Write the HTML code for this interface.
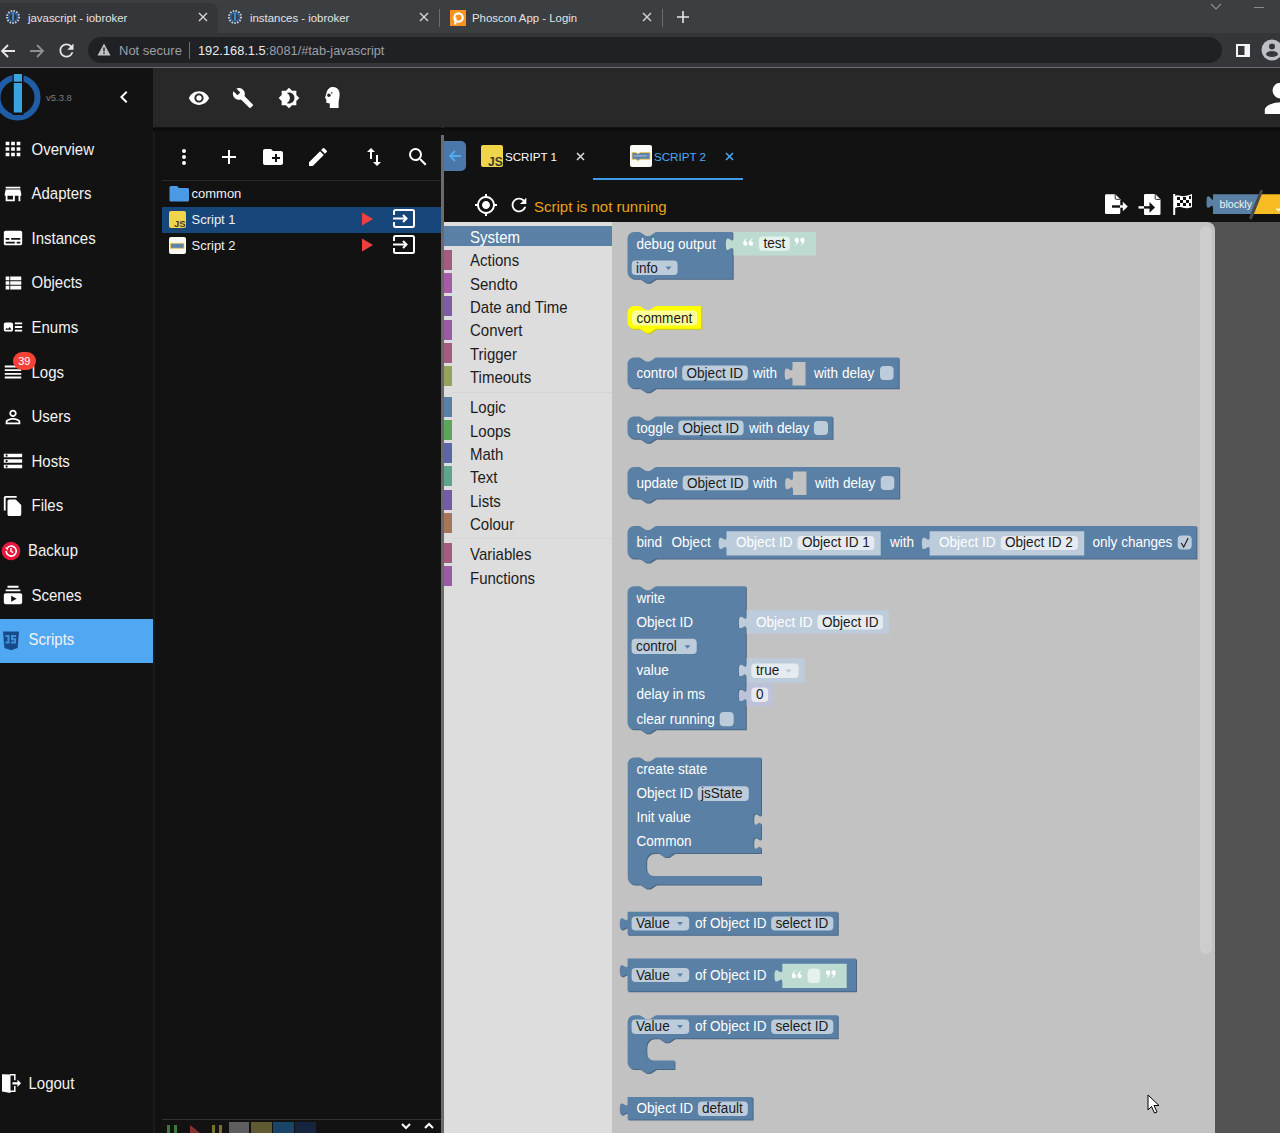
<!DOCTYPE html>
<html><head><meta charset="utf-8">
<style>
*{box-sizing:border-box;margin:0;padding:0}
html,body{width:1280px;height:1133px;overflow:hidden;background:#121212;font-family:"Liberation Sans",sans-serif}
.a{position:absolute}
svg{display:block;overflow:visible}
#tabs{left:0;top:0;width:1280px;height:33px;background:#3c3f42}
#tab1{left:0;top:2.5px;width:218px;height:33px;background:#35363a;border-radius:0 8px 0 0}
.tt{font-size:11.4px;color:#e3e3e3;top:11.5px;white-space:nowrap}
#toolbar{left:0;top:33px;width:1280px;height:34px;background:#35363a}
#omni{left:88px;top:37px;width:1134px;height:26px;background:#202124;border-radius:13px}
#sep{left:0;top:67px;width:1280px;height:1px;background:#6a6b6e}
#side{left:0;top:68px;width:153px;height:1065px;background:#121212}
#sideb{left:153px;top:127px;width:2px;height:1006px;background:#1b1b1b}
#hdr{left:153px;top:68px;width:1127px;height:59.5px;background:#282828}
.nav{position:absolute;left:0;width:153px;height:44.6px;color:#f2f2f2;font-size:15px}
.nav span{position:absolute;left:31.5px;top:13.5px;white-space:nowrap;transform:scaleY(1.1);transform-origin:0 14px}
.nav svg{position:absolute;left:2px;top:11px;width:22px;height:22px}
#tree{left:155px;top:127px;width:286px;height:1006px;background:#121212}
#split{left:440.5px;top:135px;width:3.5px;height:998px;background:#6b6b6b}
#editor{left:444px;top:127px;width:836px;height:95px;background:#121212}
#ws{left:444px;top:222px;width:836px;height:911px;background:#535353}
#tbox{left:444px;top:222px;width:168px;height:911px;background:#dddddd}
#fly{left:612px;top:222px;width:603px;height:911px;background:#c2c2c2;border-top-right-radius:8px}
.cat{position:absolute;left:470px;font-size:15px;line-height:17px;color:#1c1c1c;white-space:nowrap;transform:scaleY(1.12);transform-origin:0 14px}
.cb{position:absolute;left:444px;width:8px;height:20px}
.tr{position:absolute;font-size:13px;color:#f0f0f0;white-space:nowrap}
</style></head><body>
<!-- ============ CHROME ============ -->
<div id="tabs" class="a"></div>
<div id="tab1" class="a"></div>
<!-- favicons -->
<svg class="a" style="left:6px;top:10px" width="14" height="14" viewBox="0 0 14 14"><circle cx="7" cy="7" r="6" fill="none" stroke="#c8d0dc" stroke-width="2" stroke-dasharray="1.5 1.3"/><circle cx="7" cy="7" r="4.3" fill="none" stroke="#2a5ea8" stroke-width="1.4"/><rect x="6.2" y="2.5" width="1.6" height="8" fill="#3aa0dc"/></svg>
<svg class="a" style="left:228px;top:10px" width="14" height="14" viewBox="0 0 14 14"><circle cx="7" cy="7" r="6" fill="none" stroke="#c8d0dc" stroke-width="2" stroke-dasharray="1.5 1.3"/><circle cx="7" cy="7" r="4.3" fill="none" stroke="#2a5ea8" stroke-width="1.4"/><rect x="6.2" y="2.5" width="1.6" height="8" fill="#3aa0dc"/></svg>
<svg class="a" style="left:450px;top:10px" width="16" height="16" viewBox="0 0 16 16"><rect width="16" height="16" fill="#f7931e"/><circle cx="8.5" cy="7.5" r="4.2" fill="none" stroke="#fff" stroke-width="2.2"/><rect x="4.3" y="7.5" width="2.2" height="7" fill="#fff"/></svg>
<div class="a tt" style="left:28px">javascript - iobroker</div>
<div class="a tt" style="left:250px">instances - iobroker</div>
<div class="a tt" style="left:472px">Phoscon App - Login</div>
<svg class="a" style="left:198px;top:12px" width="10" height="10" viewBox="0 0 10 10"><path d="M1,1 9,9 M9,1 1,9" stroke="#d6d6d6" stroke-width="1.4"/></svg>
<svg class="a" style="left:419px;top:12px" width="10" height="10" viewBox="0 0 10 10"><path d="M1,1 9,9 M9,1 1,9" stroke="#d6d6d6" stroke-width="1.4"/></svg>
<svg class="a" style="left:642px;top:12px" width="10" height="10" viewBox="0 0 10 10"><path d="M1,1 9,9 M9,1 1,9" stroke="#d6d6d6" stroke-width="1.4"/></svg>
<div class="a" style="left:439px;top:9px;width:1px;height:18px;background:#6a6d70"></div>
<div class="a" style="left:662px;top:9px;width:1px;height:18px;background:#6a6d70"></div>
<svg class="a" style="left:677px;top:11px" width="12" height="12" viewBox="0 0 12 12"><path d="M6,0 V12 M0,6 H12" stroke="#e8e8e8" stroke-width="1.6"/></svg>
<svg class="a" style="left:1210px;top:3px" width="12" height="8" viewBox="0 0 12 8"><path d="M1,1 6,6 11,1" stroke="#8a8d90" stroke-width="1.2" fill="none"/></svg>
<div class="a" style="left:1254px;top:7px;width:10px;height:1.2px;background:#8a8d90"></div>
<div id="toolbar" class="a"></div>
<svg class="a" style="left:0;top:43px" width="16" height="16" viewBox="0 0 16 16"><path d="M15,8 H2 M8,2 2,8 8,14" stroke="#e6e6e6" stroke-width="1.8" fill="none"/></svg>
<svg class="a" style="left:29px;top:43px" width="16" height="16" viewBox="0 0 16 16"><path d="M1,8 H14 M8,2 14,8 8,14" stroke="#8d8f92" stroke-width="1.8" fill="none"/></svg>
<svg class="a" style="left:56px;top:39.5px" width="21" height="21" viewBox="0 0 24 24"><path fill="#e6e6e6" d="M17.65 6.35A7.958 7.958 0 0 0 12 4c-4.42 0-7.99 3.58-7.99 8s3.57 8 7.99 8c3.73 0 6.84-2.55 7.73-6h-2.08A5.99 5.99 0 0 1 12 18c-3.31 0-6-2.69-6-6s2.69-6 6-6c1.66 0 3.14.69 4.22 1.78L13 11h7V4l-2.35 2.35z"/></svg>
<div id="omni" class="a"></div>
<svg class="a" style="left:97px;top:43px" width="14" height="13" viewBox="0 0 14 13"><path d="M7,0.5 13.5,12.5 H0.5 Z" fill="#c0c2c5"/><rect x="6.3" y="4.5" width="1.4" height="4" fill="#202124"/><rect x="6.3" y="9.5" width="1.4" height="1.4" fill="#202124"/></svg>
<div class="a" style="left:119px;top:43px;font-size:13px;color:#9aa0a6;white-space:nowrap">Not secure</div>
<div class="a" style="left:189px;top:42px;width:1px;height:17px;background:#6f7073"></div>
<div class="a" style="left:198px;top:43px;font-size:12.8px;color:#e8eaed;white-space:nowrap">192.168.1.5<span style="color:#9aa0a6">:8081/#tab-javascript</span></div>
<svg class="a" style="left:1236px;top:44px" width="14" height="13" viewBox="0 0 14 13"><rect x="0" y="0" width="14" height="13" fill="#f4f4f4"/><rect x="2" y="2" width="6.5" height="9" fill="#35363a"/></svg>
<svg class="a" style="left:1261px;top:39px" width="22" height="22" viewBox="0 0 22 22"><circle cx="11" cy="11" r="10.5" fill="#bdc1c6"/><circle cx="11" cy="7.5" r="3" fill="#35363a"/><ellipse cx="11" cy="15" rx="6" ry="3" fill="#35363a"/></svg>
<div id="sep" class="a"></div>

<!-- ============ APP ============ -->
<div id="side" class="a"></div>
<div id="hdr" class="a"></div>
<div id="sideb" class="a"></div>
<!-- logo -->
<svg class="a" style="left:-6px;top:74px" width="48" height="48" viewBox="0 0 48 48"><circle cx="23.5" cy="23.5" r="20" fill="none" stroke="#1f5ea6" stroke-width="6"/><rect x="18.5" y="-1" width="11" height="42" fill="#121212"/><rect x="19.8" y="0" width="8.2" height="7.7" fill="#3ba3e0"/><rect x="19.8" y="9" width="8.2" height="29.5" fill="#3ba3e0"/></svg>
<div class="a" style="left:46px;top:92px;font-size:9.5px;color:#7a7a7a">v5.3.8</div>
<svg class="a" style="left:112px;top:85px" width="24" height="24" viewBox="0 0 24 24"><path fill="#fff" d="M15.41 7.41L14 6l-6 6 6 6 1.41-1.41L10.83 12z"/></svg>
<!-- header icons -->
<svg class="a" style="left:188px;top:86.6px" width="22" height="22" viewBox="0 0 24 24"><path fill="#fff" d="M12 4.5C7 4.5 2.73 7.61 1 12c1.73 4.39 6 7.5 11 7.5s9.27-3.11 11-7.5c-1.73-4.39-6-7.5-11-7.5zM12 17c-2.76 0-5-2.24-5-5s2.24-5 5-5 5 2.24 5 5-2.24 5-5 5zm0-8c-1.66 0-3 1.34-3 3s1.34 3 3 3 3-1.34 3-3-1.34-3-3-3z"/></svg>
<svg class="a" style="left:232.4px;top:86.6px" width="22" height="22" viewBox="0 0 24 24"><path fill="#fff" d="M22.7 19l-9.1-9.1c.9-2.3.4-5-1.5-6.9-2-2-5-2.4-7.4-1.3L9 6 6 9 1.6 4.7C.4 7.1.9 10.1 2.9 12.1c1.9 1.9 4.6 2.4 6.9 1.5l9.1 9.1c.4.4 1 .4 1.4 0l2.3-2.3c.5-.4.5-1.1.1-1.4z"/></svg>
<svg class="a" style="left:277.6px;top:86.6px" width="22" height="22" viewBox="0 0 24 24"><path fill="#fff" d="M20 8.69V4h-4.69L12 .69 8.69 4H4v4.69L.69 12 4 15.31V20h4.69L12 23.31 15.31 20H20v-4.69L23.31 12 20 8.69zM12 18c-.89 0-1.74-.2-2.5-.55C11.56 16.5 13 14.42 13 12s-1.44-4.5-3.5-5.45C10.26 6.2 11.11 6 12 6c3.31 0 6 2.69 6 6s-2.69 6-6 6z"/></svg>
<svg class="a" style="left:315px;top:82px" width="35" height="30" viewBox="0 0 35 30"><path fill="#fff" d="M14.8 26V21.6L11.3 20.8V17.2L10 15.9 11.6 10.5C12.3 7 15 5 18.2 5 22 5 24.6 8 24.6 12.3 24.6 15 24 18 23.6 20V26z"/><circle cx="13.9" cy="13.2" r="1.7" fill="#282828"/><circle cx="16.7" cy="10.8" r="0.9" fill="#555"/></svg>
<svg class="a" style="left:1256.6px;top:75.4px" width="46.8" height="46.8" viewBox="0 0 24 24"><path fill="#fff" d="M12 12c2.21 0 4-1.79 4-4s-1.79-4-4-4-4 1.79-4 4 1.79 4 4 4zm0 2c-2.67 0-8 1.34-8 4v2h16v-2c0-2.66-5.33-4-8-4z"/></svg>

<!-- sidebar nav -->
<div class="nav" style="top:127px"><svg width="24" height="24" viewBox="0 0 24 24"><path fill="#fff" d="M4 8h4V4H4v4zm6 12h4v-4h-4v4zm-6 0h4v-4H4v4zm0-6h4v-4H4v4zm6 0h4v-4h-4v4zm6-10v4h4V4h-4zm-6 4h4V4h-4v4zm6 6h4v-4h-4v4zm0 6h4v-4h-4v4z"/></svg><span>Overview</span></div>
<div class="nav" style="top:171.6px"><svg width="24" height="24" viewBox="0 0 24 24"><path fill="#fff" d="M20 4H4v2h16V4zm1 10v-2l-1-5H4l-1 5v2h1v6h10v-6h4v6h2v-6h1zm-9 4H6v-4h6v4z"/></svg><span>Adapters</span></div>
<div class="nav" style="top:216.2px"><svg width="24" height="24" viewBox="0 0 24 24"><path fill="#fff" d="M20 4H4c-1.1 0-2 .9-2 2v12c0 1.1.9 2 2 2h16c1.1 0 2-.9 2-2V6c0-1.1-.9-2-2-2zM4 12h4v2H4v-2zm10 6H4v-2h10v2zm6 0h-4v-2h4v2zm0-4H10v-2h10v2z"/></svg><span>Instances</span></div>
<div class="nav" style="top:260.8px"><svg width="24" height="24" viewBox="0 0 24 24"><path fill="#fff" d="M4 14h4v-4H4v4zm0 5h4v-4H4v4zM4 9h4V5H4v4zm5 5h12v-4H9v4zm0 5h12v-4H9v4zM9 5v4h12V5H9z"/></svg><span>Objects</span></div>
<div class="nav" style="top:305.4px"><svg width="24" height="24" viewBox="0 0 24 24"><path fill="#fff" d="M22 13h-8v-2h8v2zm0-6h-8v2h8V7zm-8 10h8v-2h-8v2zm-2-8v6c0 1.1-.9 2-2 2H4c-1.1 0-2-.9-2-2V9c0-1.1.9-2 2-2h6c1.1 0 2 .9 2 2zm-1.5 6l-2.25-3-1.75 2.26-1.25-1.51L3.5 15h7z"/></svg><span>Enums</span></div>
<div class="nav" style="top:350px"><svg width="24" height="24" viewBox="0 0 24 24"><path fill="#fff" d="M3 5h18v2H3zM3 9h18v2H3zM3 13h18v2H3zM3 17h18v2H3z"/></svg><span>Logs</span></div>
<div class="a" style="left:12.8px;top:351.5px;width:23px;height:18px;border-radius:9px;background:#f44336;color:#fff;font-size:11px;text-align:center;line-height:18px">39</div>
<div class="nav" style="top:394.6px"><svg width="24" height="24" viewBox="0 0 24 24"><path fill="#fff" d="M12 5.9c1.16 0 2.1.94 2.1 2.1s-.94 2.1-2.1 2.1S9.9 9.16 9.9 8s.94-2.1 2.1-2.1m0 9c2.97 0 6.1 1.46 6.1 2.1v1.1H5.9V17c0-.64 3.13-2.1 6.1-2.1M12 4C9.79 4 8 5.79 8 8s1.79 4 4 4 4-1.79 4-4-1.79-4-4-4zm0 9c-2.67 0-8 1.34-8 4v3h16v-3c0-2.66-5.33-4-8-4z"/></svg><span>Users</span></div>
<div class="nav" style="top:439.2px"><svg width="24" height="24" viewBox="0 0 24 24"><path fill="#fff" d="M2 20h20v-4H2v4zm2-3h2v2H4v-2zM2 4v4h20V4H2zm4 3H4V5h2v2zm-4 7h20v-4H2v4zm2-3h2v2H4v-2z"/></svg><span>Hosts</span></div>
<div class="nav" style="top:483.8px"><svg width="24" height="24" viewBox="0 0 24 24"><path fill="#fff" d="M16 1H4c-1.1 0-2 .9-2 2v14h2V3h12V1zm-1 4l6 6v10c0 1.1-.9 2-2 2H7.99C6.89 23 6 22.1 6 21l.01-14c0-1.1.89-2 1.99-2h7z"/></svg><span>Files</span></div>
<div class="nav" style="top:528.4px"><svg width="24" height="24" viewBox="0 0 24 24" style="left:0;top:10.5px;width:24px;height:24px"><circle cx="11" cy="12" r="9.3" fill="#e8173c"/><path fill="none" stroke="#fff" stroke-width="1.6" d="M6.2 12a5 5 0 1 0 1.6-3.6"/><path fill="#fff" d="M5 8.5l3.2-.2-.4 3.2z"/><path fill="none" stroke="#fff" stroke-width="1.4" d="M11 9v3.3l2.2 1.3"/></svg><span style="left:28px">Backup</span></div>
<div class="nav" style="top:573px"><svg width="24" height="24" viewBox="0 0 24 24"><path fill="#fff" d="M20 8H4V6h16v2zm-2-6H6v2h12V2zm4 10v8c0 1.1-.9 2-2 2H4c-1.1 0-2-.9-2-2v-8c0-1.1.9-2 2-2h16c1.1 0 2 .9 2 2zm-6 4l-6-3.27v6.53L16 16z"/></svg><span>Scenes</span></div>
<div class="nav" style="top:618.5px;background:#50a8f2;height:44.5px"><svg width="24" height="24" viewBox="0 0 24 24" style="left:0;top:10px;width:24px;height:24px"><path fill="#164a88" d="M3 2.6h16l-1.4 16.3-6.6 2.3-6.6-2.3z"/><path fill="#3d92d8" d="M5.5 6h4v8.5h-4v-2h2v-4.5h-2zM11 6h5v2h-3v1.3h3v5.2h-5v-2h3v-1.2h-3z"/></svg><span style="left:28.5px;top:12.5px">Scripts</span></div>
<div class="nav" style="top:1061px"><svg width="24" height="24" viewBox="0 0 24 24" style="left:0;top:10px;width:24px;height:24px"><path fill="#fff" d="M2 3.2l8.5 0.2v18.5L2 20.5z"/><path fill="none" stroke="#fff" stroke-width="1.5" d="M10 3.8h4.8v5.5 M10 20.3h4.8v-5.2"/><path fill="#fff" d="M12.5 11.2h5v-2.7l3.5 3.8-3.5 3.8v-2.7h-5z"/></svg><span style="left:28.5px;top:14px">Logout</span></div>

<!-- ============ TREE PANEL ============ -->
<div id="tree" class="a"></div>
<svg class="a" style="left:172px;top:145px" width="24" height="24" viewBox="0 0 24 24"><circle cx="12" cy="6" r="2" fill="#fff"/><circle cx="12" cy="12" r="2" fill="#fff"/><circle cx="12" cy="18" r="2" fill="#fff"/></svg>
<svg class="a" style="left:217px;top:145px" width="24" height="24" viewBox="0 0 24 24"><path fill="#fff" d="M19 13h-6v6h-2v-6H5v-2h6V5h2v6h6v2z"/></svg>
<svg class="a" style="left:261px;top:145px" width="24" height="24" viewBox="0 0 24 24"><path fill="#fff" d="M20 6h-8l-2-2H4c-1.11 0-1.99.89-1.99 2L2 18c0 1.11.89 2 2 2h16c1.11 0 2-.89 2-2V8c0-1.11-.89-2-2-2zm-1 8h-3v3h-2v-3h-3v-2h3V9h2v3h3v2z"/></svg>
<svg class="a" style="left:306px;top:145px" width="24" height="24" viewBox="0 0 24 24"><path fill="#fff" d="M3 17.25V21h3.75L17.81 9.94l-3.75-3.75L3 17.25zM20.71 7.04a.996.996 0 0 0 0-1.41l-2.34-2.34a.996.996 0 0 0-1.41 0l-1.83 1.83 3.75 3.75 1.83-1.83z"/></svg>
<svg class="a" style="left:362px;top:145px" width="24" height="24" viewBox="0 0 24 24"><path fill="#fff" d="M16 17.01V10h-2v7.01h-3L15 21l4-3.99h-3zM9 3L5 6.99h3V14h2V6.99h3L9 3z"/></svg>
<svg class="a" style="left:406px;top:145px" width="24" height="24" viewBox="0 0 24 24"><path fill="#fff" d="M15.5 14h-.79l-.28-.27A6.471 6.471 0 0 0 16 9.5 6.5 6.5 0 1 0 9.5 16c1.61 0 3.09-.59 4.23-1.57l.27.28v.79l5 4.99L20.49 19l-4.99-5zm-6 0C7.01 14 5 11.99 5 9.5S7.01 5 9.5 5 14 7.01 14 9.5 11.99 14 9.5 14z"/></svg>
<div class="a" style="left:162px;top:179.5px;width:279px;height:1.5px;background:#2a2a2a"></div>
<svg class="a" style="left:168px;top:184px" width="22" height="20" viewBox="0 0 22 20"><path fill="#4a9ae6" d="M1.5 3.5c0-1 .8-1.5 1.6-1.5H9l2 2h8.4c.9 0 1.6.6 1.6 1.5v10.4c0 .9-.7 1.6-1.6 1.6H3.1c-.9 0-1.6-.7-1.6-1.6z"/></svg>
<div class="tr" style="left:191.5px;top:186px">common</div>
<div class="a" style="left:162px;top:206.5px;width:279px;height:26px;background:#16467a"></div>
<svg class="a" style="left:169px;top:211px" width="17" height="17" viewBox="0 0 17 17"><rect width="17" height="17" rx="2" fill="#f0d54a"/><text x="5" y="15.5" font-size="9.5" font-weight="bold" font-family="Liberation Sans" fill="#3d3a2a">JS</text></svg>
<div class="tr" style="left:191.5px;top:212px">Script 1</div>
<svg class="a" style="left:361px;top:212px" width="13" height="14" viewBox="0 0 13 14"><path d="M1,0.5 12,7 1,13.5z" fill="#ee4040"/></svg>
<svg class="a" style="left:393px;top:209px" width="22" height="19" viewBox="0 0 22 19"><rect x="1" y="1" width="20" height="17" rx="1.5" fill="none" stroke="#fff" stroke-width="2"/><rect x="0" y="6" width="3" height="7" fill="#16467a"/><path d="M0,9.5 H13 M10,6 13.5,9.5 10,13" stroke="#fff" stroke-width="2" fill="none"/></svg>
<svg class="a" style="left:169px;top:237px" width="17" height="17" viewBox="0 0 17 17"><rect width="17" height="17" rx="2" fill="#fafaf5"/><path d="M1.5 6.3h13.5v5H1.5z" fill="#5e83ab" stroke="#eccb52" stroke-width="0.8"/></svg>
<div class="tr" style="left:191.5px;top:238px">Script 2</div>
<svg class="a" style="left:361px;top:238px" width="13" height="14" viewBox="0 0 13 14"><path d="M1,0.5 12,7 1,13.5z" fill="#ee4040"/></svg>
<svg class="a" style="left:393px;top:235px" width="22" height="19" viewBox="0 0 22 19"><rect x="1" y="1" width="20" height="17" rx="1.5" fill="none" stroke="#fff" stroke-width="2"/><rect x="0" y="6" width="3" height="7" fill="#121212"/><path d="M0,9.5 H13 M10,6 13.5,9.5 10,13" stroke="#fff" stroke-width="2" fill="none"/></svg>
<!-- bottom of tree -->
<div class="a" style="left:162px;top:1119px;width:279px;height:1px;background:#333"></div>
<div class="a" style="left:167px;top:1125px;width:3px;height:8px;background:#3b7a3b"></div>
<div class="a" style="left:174px;top:1125px;width:3px;height:8px;background:#3b7a3b"></div>
<svg class="a" style="left:190px;top:1125px" width="10" height="8" viewBox="0 0 10 8"><path d="M0,0 10,8 0,8z" fill="#8a2f2f"/></svg>
<div class="a" style="left:212px;top:1125px;width:3px;height:8px;background:#7a7030"></div>
<div class="a" style="left:219px;top:1125px;width:3px;height:8px;background:#7a7030"></div>
<div class="a" style="left:229px;top:1122px;width:20px;height:11px;background:#5e5e5e"></div>
<div class="a" style="left:251px;top:1122px;width:21px;height:11px;background:#5f5a32"></div>
<div class="a" style="left:273px;top:1122px;width:21px;height:11px;background:#1b4469"></div>
<div class="a" style="left:295px;top:1122px;width:21px;height:11px;background:#16243e"></div>
<svg class="a" style="left:400px;top:1122px" width="12" height="8" viewBox="0 0 12 8"><path d="M2,2 6,6 10,2" stroke="#fff" stroke-width="2" fill="none"/></svg>
<svg class="a" style="left:423px;top:1122px" width="12" height="8" viewBox="0 0 12 8"><path d="M2,6 6,2 10,6" stroke="#fff" stroke-width="2" fill="none"/></svg>

<!-- ============ EDITOR ============ -->
<div id="editor" class="a"></div>
<div id="split" class="a"></div>
<div class="a" style="left:444px;top:140.5px;width:22px;height:30px;background:#4a78aa;border-radius:0 5px 5px 0"></div>
<svg class="a" style="left:448px;top:149px" width="14" height="14" viewBox="0 0 14 14"><path d="M13,7 H2 M7,2 2,7 7,12" stroke="#55aaf0" stroke-width="1.8" fill="none"/></svg>
<svg class="a" style="left:481px;top:145px" width="22" height="22" viewBox="0 0 22 22"><rect width="22" height="22" rx="2" fill="#f0d54a"/><text x="7" y="20.5" font-size="12" font-weight="bold" font-family="Liberation Sans" fill="#3d3a2a">JS</text></svg>
<div class="a" style="left:505px;top:149.5px;font-size:11.6px;color:#fff;white-space:nowrap">SCRIPT 1</div>
<svg class="a" style="left:575.5px;top:151.5px" width="9" height="9" viewBox="0 0 9 9"><path d="M1,1 8,8 M8,1 1,8" stroke="#ddd" stroke-width="1.5"/></svg>
<svg class="a" style="left:630px;top:145px" width="22" height="22" viewBox="0 0 22 22"><rect width="22" height="22" rx="2" fill="#fafaf7"/><path d="M2 7.5h4l1 1h2l1-1h10v6.8H10l-1 1H7l-1-1H2z" fill="#5e83ab" stroke="#eccb52" stroke-width="0.9"/><rect x="4" y="10" width="13" height="1.6" fill="#8fa9c6"/></svg>
<div class="a" style="left:654px;top:149.5px;font-size:11.6px;color:#4dabf5;white-space:nowrap">SCRIPT 2</div>
<svg class="a" style="left:724.5px;top:151.5px" width="9" height="9" viewBox="0 0 9 9"><path d="M1,1 8,8 M8,1 1,8" stroke="#4dabf5" stroke-width="1.5"/></svg>
<div class="a" style="left:593px;top:177.5px;width:149.5px;height:2px;background:#3d9be8"></div>
<svg class="a" style="left:473.5px;top:192.5px" width="24" height="24" viewBox="0 0 24 24"><path fill="#fff" d="M12 8c-2.21 0-4 1.79-4 4s1.79 4 4 4 4-1.79 4-4-1.79-4-4-4zm8.94 3A8.994 8.994 0 0 0 13 3.06V1h-2v2.06A8.994 8.994 0 0 0 3.06 11H1v2h2.06A8.994 8.994 0 0 0 11 20.94V23h2v-2.06A8.994 8.994 0 0 0 20.94 13H23v-2h-2.06zM12 19c-3.87 0-7-3.13-7-7s3.13-7 7-7 7 3.13 7 7-3.13 7-7 7z"/></svg>
<svg class="a" style="left:508px;top:193.5px" width="22" height="22" viewBox="0 0 24 24"><path fill="#fff" d="M17.65 6.35A7.958 7.958 0 0 0 12 4c-4.42 0-7.99 3.58-7.99 8s3.57 8 7.99 8c3.73 0 6.84-2.55 7.73-6h-2.08A5.99 5.99 0 0 1 12 18c-3.31 0-6-2.69-6-6s2.69-6 6-6c1.66 0 3.14.69 4.22 1.78L13 11h7V4l-2.35 2.35z"/></svg>
<div class="a" style="left:534px;top:197.5px;font-size:15px;color:#eca31a;white-space:nowrap">Script is not running</div>
<!-- right toolbar icons -->
<svg class="a" style="left:1104px;top:193px" width="24" height="23" viewBox="0 0 24 23"><path fill="#fff" d="M1 2.5q0-1.3 1.3-1.3h9l5 5v13.6q0 1.2-1.2 1.2H2.3Q1 21 1 19.8z"/><path d="M11.2 1.2v4.2q0 .9.9.9h4.2" fill="none" stroke="#121212" stroke-width="0.9"/><rect x="8" y="12.3" width="8" height="2.4" fill="#121212"/><rect x="16" y="12.3" width="3.2" height="2.4" fill="#fff"/><path d="M18.8 8.8l5 4.7-5 4.7z" fill="#fff"/></svg>
<svg class="a" style="left:1138px;top:193px" width="24" height="23" viewBox="0 0 24 23"><rect x="0.5" y="13.2" width="6" height="2.4" fill="#fff"/><path fill="#fff" d="M6 2.3q0-1.3 1.3-1.3h10l5.2 5.2v14.6q0 1.2-1.2 1.2H7.3Q6 22 6 20.8z"/><path d="M17.2 1v4.5q0 .9.9.9h4.4" fill="none" stroke="#121212" stroke-width="0.9"/><rect x="6" y="13.2" width="6" height="2.4" fill="#121212"/><path d="M11.5 9l5.5 5.4-5.5 5.4z" fill="#121212"/></svg>
<svg class="a" style="left:1172px;top:193px" width="24" height="22" viewBox="0 0 24 22"><rect x="1.2" y="1" width="2" height="21" fill="#fff"/><path fill="#fff" d="M3 3c3-2 6 1 10 0s5-1 7-2v13c-2 1-4 1.5-7 1s-6-2-10 0z"/><g fill="#121212"><rect x="5" y="4" width="3" height="3"/><rect x="11" y="4" width="3" height="3"/><rect x="17" y="3" width="2" height="3"/><rect x="8" y="7" width="3" height="3"/><rect x="14" y="7" width="3" height="3"/><rect x="5" y="10" width="3" height="3"/><rect x="11" y="10" width="3" height="3"/><rect x="17" y="10" width="2" height="3"/></g></svg>
<svg class="a" style="left:1205px;top:190px" width="75" height="32" viewBox="0 0 75 32"><path d="M8 4.3H54L46 24H8V18.6c0-8.5-6.5,6.8-6.5,-6.4S8,12.7 8,9.6z" fill="#5b80a5"/><text x="14.6" y="17.8" font-size="10.6" fill="#f2f4f8" font-family="Liberation Sans">blockly</text><path d="M55 4.3H75V24H47z" fill="#f8bd22"/><path d="M56.4 1.3L45.8 27.9" stroke="#4a4a4a" stroke-width="3" stroke-linecap="round"/><path d="M71.5 18.5l2 2 l3 -3" stroke="#fff" stroke-width="1.5" fill="none"/></svg>

<div class="a" style="left:153px;top:127.5px;width:1127px;height:4px;background:linear-gradient(#090909,#121212)"></div>
<!-- ============ BLOCKLY ============ -->
<div id="ws" class="a"></div>
<div id="tbox" class="a"></div>
<div id="fly" class="a"></div>
<div class="a" style="left:444px;top:226px;width:168px;height:20px;background:#5b80a5"></div>
<div class="cat" style="left:470px;top:229px;color:#fff">System</div>
<div class="cb" style="top:249.5px;background:#a55b80"></div><div class="cat" style="top:252px">Actions</div>
<div class="cb" style="top:273px;background:#a55ba5"></div><div class="cat" style="top:275.5px">Sendto</div>
<div class="cb" style="top:296.3px;background:#805ba5"></div><div class="cat" style="top:299px">Date and Time</div>
<div class="cb" style="top:319.6px;background:#995ba5"></div><div class="cat" style="top:322px">Convert</div>
<div class="cb" style="top:342.9px;background:#a55b80"></div><div class="cat" style="top:345.5px">Trigger</div>
<div class="cb" style="top:366.2px;background:#94a55b"></div><div class="cat" style="top:369px">Timeouts</div>
<div class="a" style="left:452px;top:392px;width:160px;height:1px;background:#d5d5d5"></div>
<div class="cb" style="top:396.5px;background:#5b80a5"></div><div class="cat" style="top:399px">Logic</div>
<div class="cb" style="top:419.8px;background:#5ba55b"></div><div class="cat" style="top:422.5px">Loops</div>
<div class="cb" style="top:443.1px;background:#5b67a5"></div><div class="cat" style="top:446px">Math</div>
<div class="cb" style="top:466.4px;background:#5ba58c"></div><div class="cat" style="top:469px">Text</div>
<div class="cb" style="top:489.7px;background:#745ba5"></div><div class="cat" style="top:492.5px">Lists</div>
<div class="cb" style="top:513px;background:#a5745b"></div><div class="cat" style="top:515.5px">Colour</div>
<div class="a" style="left:452px;top:538px;width:160px;height:1px;background:#d5d5d5"></div>
<div class="cb" style="top:543px;background:#a55b80"></div><div class="cat" style="top:546px">Variables</div>
<div class="cb" style="top:566.3px;background:#995ba5"></div><div class="cat" style="top:569.5px">Functions</div>
<!-- flyout scrollbar -->
<div class="a" style="left:1200px;top:226px;width:12px;height:728px;border-radius:6px;background:#cdcdcd"></div>
<svg class="a" style="left:0;top:0" width="1280" height="1133" viewBox="0 0 1280 1133" font-family="Liberation Sans">
<path d="M627.5,238.5 A6.5,6.5 0 0,1 634.0,232 H639.8 l6,4 4,0 6,-4 H732.7 V237.8 c0,8.5 -7.8,-6.8 -7.8,6.4 s7.8,-2.1 7.8,6.4 V278.7 H655.8 l-6,4 -4,0 -6,-4 H634.0 A6.5,6.5 0 0,1 627.5,272.2 Z" fill="#496684" transform="translate(1,1)"/><path d="M627.5,238.5 A6.5,6.5 0 0,1 634.0,232 H639.8 l6,4 4,0 6,-4 H732.7 V237.8 c0,8.5 -7.8,-6.8 -7.8,6.4 s7.8,-2.1 7.8,6.4 V278.7 H655.8 l-6,4 -4,0 -6,-4 H634.0 A6.5,6.5 0 0,1 627.5,272.2 Z" fill="#5b80a5"/>
<path d="M733.5,232 H816 V255.5 H733.5 V250.6 c0,-8.5 -7.8,6.8 -7.8,-6.4 s7.8,2.1 7.8,-6.4 Z" fill="#bddbd1"/>
<text transform="translate(636.5,248.8) scale(0.93,1)" fill="#fff" font-size="14.6">debug output</text>
<rect x="631.7" y="260.4" width="45.90" height="14.70" rx="4" fill="#bdccdb"/>
<text transform="translate(636,273) scale(0.93,1)" fill="#1a1a1a" font-size="14.6">info</text>
<path d="M665.5,266.5 h6 l-3,3.5 z" fill="#5b80a5"/>
<path d="M747.8,237.5 C744.8,238.7 743.2,241.3 743.2,243.6 A2.2,2.2 0 1,0 745.4,241.4 C745.7,239.8 746.6,238.6 747.8,237.5 Z M753.4,237.5 C750.4,238.7 748.8000000000001,241.3 748.8000000000001,243.6 A2.2,2.2 0 1,0 751.0,241.4 C751.3000000000001,239.8 752.2,238.6 753.4,237.5 Z " fill="#fff"/><path d="M4.8,0 C1.8,1.2 0.2,3.8 0.2,6.1 A2.2,2.2 0 1,0 2.4,3.9 C2.7,2.3 3.6,1.1 4.8,0 Z M10.399999999999999,0 C7.3999999999999995,1.2 5.8,3.8 5.8,6.1 A2.2,2.2 0 1,0 8.0,3.9 C8.3,2.3 9.2,1.1 10.399999999999999,0 Z " fill="#fff" transform="translate(804.8,246.1) rotate(180)"/>
<rect x="758.8" y="236.4" width="31.00" height="14.40" rx="4" fill="#e5f1ed"/>
<text transform="translate(763.5,248) scale(0.93,1)" fill="#1a1a1a" font-size="14.6">test</text>
<path d="M627.5,312.5 A6.5,6.5 0 0,1 634.0,306 H639.8 l6,4 4,0 6,-4 H701.2 V328.7 H655.8 l-6,4 -4,0 -6,-4 H634.0 A6.5,6.5 0 0,1 627.5,322.2 Z" fill="#cccc00" transform="translate(1,1)"/><path d="M627.5,312.5 A6.5,6.5 0 0,1 634.0,306 H639.8 l6,4 4,0 6,-4 H701.2 V328.7 H655.8 l-6,4 -4,0 -6,-4 H634.0 A6.5,6.5 0 0,1 627.5,322.2 Z" fill="#ffff00"/>
<rect x="632" y="310.5" width="65.00" height="15.00" rx="4" fill="#ffff99"/>
<text transform="translate(636.5,322.5) scale(0.93,1)" fill="#1a1a1a" font-size="14.6">comment</text>
<path d="M627.5,364.0 A6.5,6.5 0 0,1 634.0,357.5 H639.8 l6,4 4,0 6,-4 H898.7 V388.2 H655.8 l-6,4 -4,0 -6,-4 H634.0 A6.5,6.5 0 0,1 627.5,381.7 Z" fill="#496684" transform="translate(1,1)"/><path d="M627.5,364.0 A6.5,6.5 0 0,1 634.0,357.5 H639.8 l6,4 4,0 6,-4 H898.7 V388.2 H655.8 l-6,4 -4,0 -6,-4 H634.0 A6.5,6.5 0 0,1 627.5,381.7 Z" fill="#5b80a5"/>
<text transform="translate(636.5,377.5) scale(0.93,1)" fill="#fff" font-size="14.6">control</text>
<rect x="682.2" y="365.6" width="65.60" height="14.80" rx="4" fill="#bdccdb"/>
<text transform="translate(686.5,377.5) scale(0.93,1)" fill="#1a1a1a" font-size="14.6">Object ID</text>
<text transform="translate(753,377.5) scale(0.93,1)" fill="#fff" font-size="14.6">with</text>
<path d="M792.5,362 H805.5 V385.6 H792.5 V380.6 c0,-8.5 -7.8,6.8 -7.8,-6.4 s7.8,2.1 7.8,-6.4 Z" fill="#c2c2c2"/>
<text transform="translate(814,377.5) scale(0.93,1)" fill="#fff" font-size="14.6">with delay</text>
<rect x="880" y="366" width="13.60" height="14.00" rx="4" fill="#bdccdb"/>
<path d="M627.5,423.0 A6.5,6.5 0 0,1 634.0,416.5 H639.8 l6,4 4,0 6,-4 H832.5 V438.7 H655.8 l-6,4 -4,0 -6,-4 H634.0 A6.5,6.5 0 0,1 627.5,432.2 Z" fill="#496684" transform="translate(1,1)"/><path d="M627.5,423.0 A6.5,6.5 0 0,1 634.0,416.5 H639.8 l6,4 4,0 6,-4 H832.5 V438.7 H655.8 l-6,4 -4,0 -6,-4 H634.0 A6.5,6.5 0 0,1 627.5,432.2 Z" fill="#5b80a5"/>
<text transform="translate(636.5,432.5) scale(0.93,1)" fill="#fff" font-size="14.6">toggle</text>
<rect x="678.4" y="420.6" width="65.20" height="14.60" rx="4" fill="#bdccdb"/>
<text transform="translate(682.5,432.5) scale(0.93,1)" fill="#1a1a1a" font-size="14.6">Object ID</text>
<text transform="translate(749,432.5) scale(0.93,1)" fill="#fff" font-size="14.6">with delay</text>
<rect x="813.9" y="421" width="14.10" height="14.00" rx="4" fill="#bdccdb"/>
<path d="M627.5,473.5 A6.5,6.5 0 0,1 634.0,467 H639.8 l6,4 4,0 6,-4 H899.2 V498.4 H655.8 l-6,4 -4,0 -6,-4 H634.0 A6.5,6.5 0 0,1 627.5,491.9 Z" fill="#496684" transform="translate(1,1)"/><path d="M627.5,473.5 A6.5,6.5 0 0,1 634.0,467 H639.8 l6,4 4,0 6,-4 H899.2 V498.4 H655.8 l-6,4 -4,0 -6,-4 H634.0 A6.5,6.5 0 0,1 627.5,491.9 Z" fill="#5b80a5"/>
<text transform="translate(636.5,487.5) scale(0.93,1)" fill="#fff" font-size="14.6">update</text>
<rect x="682.7" y="475.5" width="65.60" height="14.80" rx="4" fill="#bdccdb"/>
<text transform="translate(687,487.5) scale(0.93,1)" fill="#1a1a1a" font-size="14.6">Object ID</text>
<text transform="translate(753,487.5) scale(0.93,1)" fill="#fff" font-size="14.6">with</text>
<path d="M793,471.5 H806.4 V495 H793 V490.1 c0,-8.5 -7.8,6.8 -7.8,-6.4 s7.8,2.1 7.8,-6.4 Z" fill="#c2c2c2"/>
<text transform="translate(815,487.5) scale(0.93,1)" fill="#fff" font-size="14.6">with delay</text>
<rect x="880.7" y="476" width="13.60" height="14.00" rx="4" fill="#bdccdb"/>
<path d="M627.5,532.5 A6.5,6.5 0 0,1 634.0,526 H639.8 l6,4 4,0 6,-4 H1196.4 V558.6 H655.8 l-6,4 -4,0 -6,-4 H634.0 A6.5,6.5 0 0,1 627.5,552.1 Z" fill="#496684" transform="translate(1,1)"/><path d="M627.5,532.5 A6.5,6.5 0 0,1 634.0,526 H639.8 l6,4 4,0 6,-4 H1196.4 V558.6 H655.8 l-6,4 -4,0 -6,-4 H634.0 A6.5,6.5 0 0,1 627.5,552.1 Z" fill="#5b80a5"/>
<text transform="translate(636.5,546.7) scale(0.93,1)" fill="#fff" font-size="14.6">bind</text>
<text transform="translate(671.5,546.7) scale(0.93,1)" fill="#fff" font-size="14.6">Object</text>
<path d="M726.5,531.2 H880.7 V555.4 H726.5 V549.8000000000001 c0,-8.5 -7.8,6.8 -7.8,-6.4 s7.8,2.1 7.8,-6.4 Z" fill="#bdccdb"/>
<text transform="translate(736,546.7) scale(0.93,1)" fill="#fff" font-size="14.6">Object ID</text>
<rect x="797.5" y="536" width="76.90" height="14.00" rx="4" fill="#e5ebf1"/>
<text transform="translate(802,546.7) scale(0.93,1)" fill="#1a1a1a" font-size="14.6">Object ID 1</text>
<text transform="translate(890,546.7) scale(0.93,1)" fill="#fff" font-size="14.6">with</text>
<path d="M929.7,531.2 H1084.2 V555.4 H929.7 V549.8000000000001 c0,-8.5 -7.8,6.8 -7.8,-6.4 s7.8,2.1 7.8,-6.4 Z" fill="#bdccdb"/>
<text transform="translate(939,546.7) scale(0.93,1)" fill="#fff" font-size="14.6">Object ID</text>
<rect x="1000.8" y="536" width="77.20" height="14.00" rx="4" fill="#e5ebf1"/>
<text transform="translate(1005,546.7) scale(0.93,1)" fill="#1a1a1a" font-size="14.6">Object ID 2</text>
<text transform="translate(1092.5,546.7) scale(0.93,1)" fill="#fff" font-size="14.6">only changes</text>
<rect x="1177.7" y="535.5" width="14.00" height="14.00" rx="4" fill="#bdccdb"/><path d="M1181.2,543.0 l2.5,4 l4.5,-9" stroke="#222" stroke-width="1.2" fill="none"/>
<path d="M627.5,592.7 A6.5,6.5 0 0,1 634.0,586.2 H639.8 l6,4 4,0 6,-4 H745.8000000000001 V616.0 c0,8.5 -7.8,-6.8 -7.8,6.4 s7.8,-2.1 7.8,6.4 V664.0 c0,8.5 -7.8,-6.8 -7.8,6.4 s7.8,-2.1 7.8,6.4 V688.3 c0,8.5 -7.8,-6.8 -7.8,6.4 s7.8,-2.1 7.8,6.4 V729.3000000000001 H655.8 l-6,4 -4,0 -6,-4 H634.0 A6.5,6.5 0 0,1 627.5,722.8000000000001 Z" fill="#496684" transform="translate(1,1)"/><path d="M627.5,592.7 A6.5,6.5 0 0,1 634.0,586.2 H639.8 l6,4 4,0 6,-4 H745.8000000000001 V616.0 c0,8.5 -7.8,-6.8 -7.8,6.4 s7.8,-2.1 7.8,6.4 V664.0 c0,8.5 -7.8,-6.8 -7.8,6.4 s7.8,-2.1 7.8,6.4 V688.3 c0,8.5 -7.8,-6.8 -7.8,6.4 s7.8,-2.1 7.8,6.4 V729.3000000000001 H655.8 l-6,4 -4,0 -6,-4 H634.0 A6.5,6.5 0 0,1 627.5,722.8000000000001 Z" fill="#5b80a5"/>
<text transform="translate(636.5,602.5) scale(0.93,1)" fill="#fff" font-size="14.6">write</text>
<text transform="translate(636.5,626.5) scale(0.93,1)" fill="#fff" font-size="14.6">Object ID</text>
<rect x="631.6" y="638.7" width="65.10" height="15.30" rx="4" fill="#bdccdb"/>
<text transform="translate(636,651) scale(0.93,1)" fill="#1a1a1a" font-size="14.6">control</text>
<path d="M684.5,645.3 h6 l-3,3.5 z" fill="#5b80a5"/>
<text transform="translate(636.5,675) scale(0.93,1)" fill="#fff" font-size="14.6">value</text>
<text transform="translate(636.5,699) scale(0.93,1)" fill="#fff" font-size="14.6">delay in ms</text>
<text transform="translate(636.5,723.5) scale(0.93,1)" fill="#fff" font-size="14.6">clear running</text>
<rect x="719.7" y="712" width="14.00" height="14.20" rx="4" fill="#bdccdb"/>
<path d="M746.6,610.2 H888.9 V633.6 H746.6 V628.8000000000001 c0,-8.5 -7.8,6.8 -7.8,-6.4 s7.8,2.1 7.8,-6.4 Z" fill="#bdccdb"/>
<text transform="translate(756,626.5) scale(0.93,1)" fill="#fff" font-size="14.6">Object ID</text>
<rect x="817.4" y="614.8" width="65.60" height="14.80" rx="4" fill="#e5ebf1"/>
<text transform="translate(822,626.5) scale(0.93,1)" fill="#1a1a1a" font-size="14.6">Object ID</text>
<path d="M746.6,658.2 H804.5 V682.8 H746.6 V676.8000000000001 c0,-8.5 -7.8,6.8 -7.8,-6.4 s7.8,2.1 7.8,-6.4 Z" fill="#bdccdb"/>
<rect x="751.3" y="663.4" width="47.40" height="14.70" rx="4" fill="#e5ebf1"/>
<text transform="translate(756,675) scale(0.93,1)" fill="#1a1a1a" font-size="14.6">true</text>
<path d="M785.5,669.5 h6 l-3,3.5 z" fill="#bdccdb"/>
<path d="M746.6,683.3 H773.3 V706.2 H746.6 V701.9 c0,-8.5 -7.8,6.8 -7.8,-6.4 s7.8,2.1 7.8,-6.4 Z" fill="#bdc2db"/>
<rect x="751.3" y="687.5" width="16.90" height="14.50" rx="4" fill="#e5e7f1"/>
<text transform="translate(756,699) scale(0.93,1)" fill="#1a1a1a" font-size="14.6">0</text>
<path d="M627.7,764.0 A6.5,6.5 0 0,1 634.2,757.5 H640.0 l6,4 4,0 6,-4 H761.0 V812.8 c0,8.5 -7.8,-6.8 -7.8,6.4 s7.8,-2.1 7.8,6.4 V836.8 c0,8.5 -7.8,-6.8 -7.8,6.4 s7.8,-2.1 7.8,6.4 V853 H674.5 l-6,4 -4,0 -6,-4 H654.2 A8,8 0 0,0 646.2,861 V868 A8,8 0 0,0 654.2,876 H761.0 V884.5 H656.0 l-6,4 -4,0 -6,-4 H634.2 A6.5,6.5 0 0,1 627.7,878.0 Z" fill="#496684" transform="translate(1,1)"/><path d="M627.7,764.0 A6.5,6.5 0 0,1 634.2,757.5 H640.0 l6,4 4,0 6,-4 H761.0 V812.8 c0,8.5 -7.8,-6.8 -7.8,6.4 s7.8,-2.1 7.8,6.4 V836.8 c0,8.5 -7.8,-6.8 -7.8,6.4 s7.8,-2.1 7.8,6.4 V853 H674.5 l-6,4 -4,0 -6,-4 H654.2 A8,8 0 0,0 646.2,861 V868 A8,8 0 0,0 654.2,876 H761.0 V884.5 H656.0 l-6,4 -4,0 -6,-4 H634.2 A6.5,6.5 0 0,1 627.7,878.0 Z" fill="#5b80a5"/>
<text transform="translate(636.5,773.5) scale(0.93,1)" fill="#fff" font-size="14.6">create state</text>
<text transform="translate(636.5,797.8) scale(0.93,1)" fill="#fff" font-size="14.6">Object ID</text>
<rect x="697.7" y="786.3" width="51.10" height="14.70" rx="4" fill="#bdccdb"/>
<text transform="translate(701,797.8) scale(0.93,1)" fill="#1a1a1a" font-size="14.6">jsState</text>
<text transform="translate(636.5,821.8) scale(0.93,1)" fill="#fff" font-size="14.6">Init value</text>
<text transform="translate(636.5,845.8) scale(0.93,1)" fill="#fff" font-size="14.6">Common</text>
<path d="M627.6,911.7 H837.7 V934.8000000000001 H627.6 V930.3000000000001 c0,-8.5 -7.8,6.8 -7.8,-6.4 s7.8,2.1 7.8,-6.4 Z" fill="#496684" transform="translate(1,1)"/><path d="M627.6,911.7 H837.7 V934.8000000000001 H627.6 V930.3000000000001 c0,-8.5 -7.8,6.8 -7.8,-6.4 s7.8,2.1 7.8,-6.4 Z" fill="#5b80a5"/>
<rect x="631.6" y="916.4" width="57.60" height="14.10" rx="4" fill="#bdccdb"/>
<text transform="translate(636,928) scale(0.93,1)" fill="#1a1a1a" font-size="14.6">Value</text>
<path d="M677,922 h6 l-3,3.5 z" fill="#5b80a5"/>
<text transform="translate(695,928) scale(0.93,1)" fill="#fff" font-size="14.6">of Object ID</text>
<rect x="771.2" y="916.4" width="62.10" height="14.10" rx="4" fill="#bdccdb"/>
<text transform="translate(775.5,928) scale(0.93,1)" fill="#1a1a1a" font-size="14.6">select ID</text>
<path d="M627.6,958.6 H856.0 V991.3000000000001 H627.6 V977.2 c0,-8.5 -7.8,6.8 -7.8,-6.4 s7.8,2.1 7.8,-6.4 Z" fill="#496684" transform="translate(1,1)"/><path d="M627.6,958.6 H856.0 V991.3000000000001 H627.6 V977.2 c0,-8.5 -7.8,6.8 -7.8,-6.4 s7.8,2.1 7.8,-6.4 Z" fill="#5b80a5"/>
<rect x="631.6" y="968" width="57.60" height="14.00" rx="4" fill="#bdccdb"/>
<text transform="translate(636,979.5) scale(0.93,1)" fill="#1a1a1a" font-size="14.6">Value</text>
<path d="M677,973.5 h6 l-3,3.5 z" fill="#5b80a5"/>
<text transform="translate(695,979.5) scale(0.93,1)" fill="#fff" font-size="14.6">of Object ID</text>
<path d="M782.3,963.7 H846.7 V987.9 H782.3 V982.3000000000001 c0,-8.5 -7.8,6.8 -7.8,-6.4 s7.8,2.1 7.8,-6.4 Z" fill="#bddbd1"/>
<path d="M796.4,970 C793.4,971.2 791.8000000000001,973.8 791.8000000000001,976.1 A2.2,2.2 0 1,0 794.0,973.9 C794.3000000000001,972.3 795.2,971.1 796.4,970 Z M802.0,970 C799.0,971.2 797.4000000000001,973.8 797.4000000000001,976.1 A2.2,2.2 0 1,0 799.6,973.9 C799.9000000000001,972.3 800.8000000000001,971.1 802.0,970 Z " fill="#fff"/><path d="M4.8,0 C1.8,1.2 0.2,3.8 0.2,6.1 A2.2,2.2 0 1,0 2.4,3.9 C2.7,2.3 3.6,1.1 4.8,0 Z M10.399999999999999,0 C7.3999999999999995,1.2 5.8,3.8 5.8,6.1 A2.2,2.2 0 1,0 8.0,3.9 C8.3,2.3 9.2,1.1 10.399999999999999,0 Z " fill="#fff" transform="translate(836.0,978.6) rotate(180)"/>
<rect x="807.6" y="968.5" width="12.60" height="14.50" rx="4" fill="#e5f1ed"/>
<path d="M627.6,1021.8 A6.5,6.5 0 0,1 634.1,1015.3 H639.9 l6,4 4,0 6,-4 H837.7 V1038.3 H674.5999999999999 l-6,4 -4,0 -6,-4 H654.3 A8,8 0 0,0 646.3,1046.3 V1052.5 A8,8 0 0,0 654.3,1060.5 H674.4 V1069.1000000000001 H655.9 l-6,4 -4,0 -6,-4 H634.1 A6.5,6.5 0 0,1 627.6,1062.6000000000001 Z" fill="#496684" transform="translate(1,1)"/><path d="M627.6,1021.8 A6.5,6.5 0 0,1 634.1,1015.3 H639.9 l6,4 4,0 6,-4 H837.7 V1038.3 H674.5999999999999 l-6,4 -4,0 -6,-4 H654.3 A8,8 0 0,0 646.3,1046.3 V1052.5 A8,8 0 0,0 654.3,1060.5 H674.4 V1069.1000000000001 H655.9 l-6,4 -4,0 -6,-4 H634.1 A6.5,6.5 0 0,1 627.6,1062.6000000000001 Z" fill="#5b80a5"/>
<rect x="631.6" y="1019.5" width="57.60" height="14.50" rx="4" fill="#bdccdb"/>
<text transform="translate(636,1031) scale(0.93,1)" fill="#1a1a1a" font-size="14.6">Value</text>
<path d="M677,1025 h6 l-3,3.5 z" fill="#5b80a5"/>
<text transform="translate(695,1031) scale(0.93,1)" fill="#fff" font-size="14.6">of Object ID</text>
<rect x="771.2" y="1019.5" width="62.10" height="14.50" rx="4" fill="#bdccdb"/>
<text transform="translate(775.5,1031) scale(0.93,1)" fill="#1a1a1a" font-size="14.6">select ID</text>
<path d="M627.6,1096.9 H752.6 V1119.5 H627.6 V1115.5 c0,-8.5 -7.8,6.8 -7.8,-6.4 s7.8,2.1 7.8,-6.4 Z" fill="#496684" transform="translate(1,1)"/><path d="M627.6,1096.9 H752.6 V1119.5 H627.6 V1115.5 c0,-8.5 -7.8,6.8 -7.8,-6.4 s7.8,2.1 7.8,-6.4 Z" fill="#5b80a5"/>
<text transform="translate(636.5,1113) scale(0.93,1)" fill="#fff" font-size="14.6">Object ID</text>
<rect x="697.9" y="1101.5" width="49.90" height="14.50" rx="4" fill="#bdccdb"/>
<text transform="translate(702,1113) scale(0.93,1)" fill="#1a1a1a" font-size="14.6">default</text>
</svg>
<!-- cursor -->
<svg class="a" style="left:1147px;top:1094px" width="14" height="20" viewBox="0 0 14 20"><path d="M1,1 V16 L4.5,12.5 7.5,19 10,18 7,11.5 12,11.5z" fill="#fff" stroke="#000" stroke-width="1"/></svg>
</body></html>
